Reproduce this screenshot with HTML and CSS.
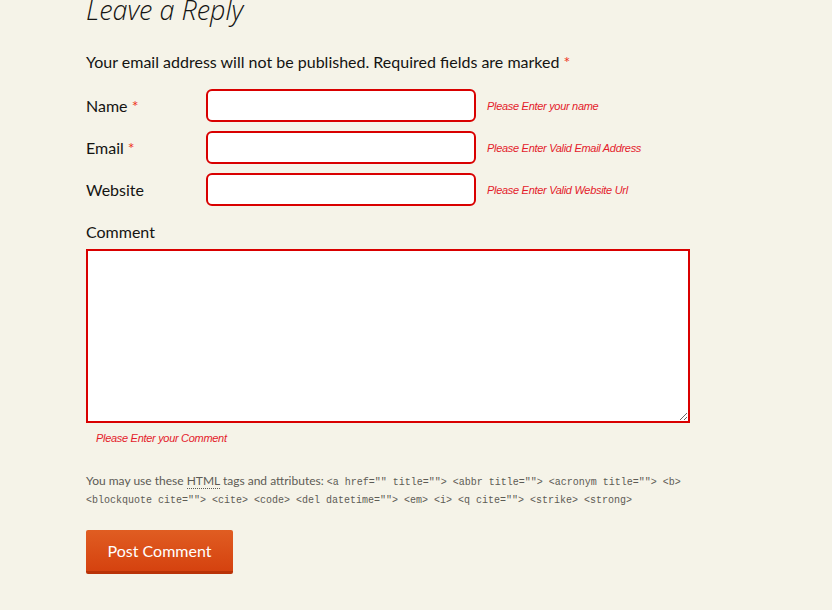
FILE: index.html
```html
<!DOCTYPE html>
<html>
<head>
<meta charset="utf-8">
<link rel="stylesheet" href="styles.css">
</head>
<body>
<div class="respond">
  <h3 class="reply-title">Leave a Reply</h3>
  <form class="comment-form">
    <p class="notes">Your email address will not be published. Required fields are marked <span class="req">*</span></p>
    <div class="field">
      <label class="lbl">Name <span class="req">*</span></label>
      <input class="inp" type="text">
      <span class="err">Please Enter your name</span>
    </div>
    <div class="field">
      <label class="lbl">Email <span class="req">*</span></label>
      <input class="inp" type="text">
      <span class="err">Please Enter Valid Email Address</span>
    </div>
    <div class="field">
      <label class="lbl">Website</label>
      <input class="inp" type="text">
      <span class="err">Please Enter Valid Website Url</span>
    </div>
    <div class="comment-field">
      <label class="lbl">Comment</label>
      <textarea class="ta"></textarea>
      <span class="err err-comment">Please Enter your Comment</span>
    </div>
    <p class="allowed">You may use these <abbr title="HyperText Markup Language">HTML</abbr> tags and attributes: <code>&lt;a href="" title=""&gt; &lt;abbr title=""&gt; &lt;acronym title=""&gt; &lt;b&gt; &lt;blockquote cite=""&gt; &lt;cite&gt; &lt;code&gt; &lt;del datetime=""&gt; &lt;em&gt; &lt;i&gt; &lt;q cite=""&gt; &lt;strike&gt; &lt;strong&gt;</code></p>
    <button class="submit" type="button">Post Comment</button>
  </form>
</div>
</body>
</html>
```
FILE: styles.css
```css
html, body {
  margin: 0;
  padding: 0;
  background: #f5f3e8;
}
body {
  font-family: Lato, "Open Sans", sans-serif;
  color: #141412;
}
.respond {
  padding: 0 86px;
  width: 620px;
}
.reply-title {
  margin: -8px 0 0;
  font-family: "Open Sans", sans-serif;
  font-weight: 300;
  font-style: italic;
  font-size: 27px;
  line-height: 36px;
  color: #141412;
}
.notes {
  margin: 15px 0 16px;
  padding-top: 8px;
  font-size: 16px;
  line-height: 22px;
}
.req { color: #ed331c; }
.field {
  display: flex;
  align-items: center;
  height: 33px;
  margin-bottom: 9px;
}
.lbl {
  font-size: 16px;
  width: 120px;
  flex: none;
}
.inp {
  box-sizing: border-box;
  width: 270px;
  height: 33px;
  border: 2px solid #d90000;
  border-radius: 6px;
  background: #fff;
  margin: 0;
  padding: 4px 8px;
  flex: none;
}
.err {
  font-family: "Liberation Sans", sans-serif;
  font-style: italic;
  font-size: 11px;
  color: #e41b2b;
  margin-left: 11px;
  letter-spacing: -0.3px;
}
.comment-field {
  display: flex;
  flex-direction: column;
  margin-top: 15px;
}
.comment-field .lbl {
  width: auto;
  line-height: 22px;
  margin-bottom: 6px;
}
.ta {
  box-sizing: border-box;
  width: 604px;
  height: 174px;
  border: 2px solid #d90000;
  border-radius: 0;
  background: #fff;
  margin: 0;
  resize: both;
}
.err-comment {
  margin: 9px 0 0 10px;
}
.allowed {
  margin: 28px 0 22px;
  font-size: 12px;
  line-height: 18px;
  color: #5d5b55;
  width: 604px;
}
.allowed abbr {
  text-decoration: none;
  border-bottom: 1px dotted #5d5b55;
}
.allowed code {
  font-family: "Liberation Mono", monospace;
  font-size: 10px;
  line-height: 10px;
  font-weight: normal;
  color: #5d5b55;
}
.submit {
  width: 147px;
  height: 44px;
  border: none;
  border-bottom: 3px solid #b93207;
  border-radius: 2px;
  background: linear-gradient(to bottom, #e05d22, #d5420f);
  color: #fff;
  font-family: Lato, sans-serif;
  font-size: 16px;
  padding: 0;
}
```
